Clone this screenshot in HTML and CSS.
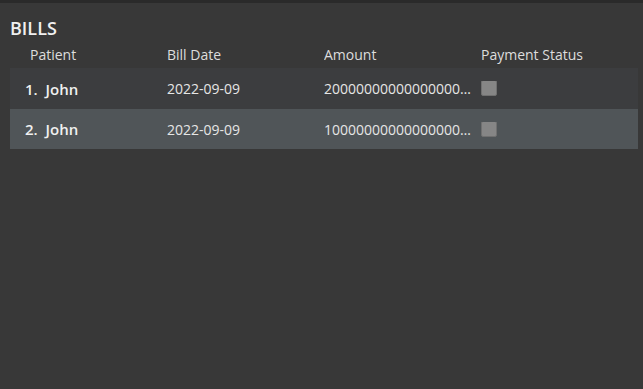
FILE: index.html
```html
<!DOCTYPE html>
<html lang="en">

<head>
	<meta charset="UTF-8">
	<meta name="viewport" content="width=device-width, initial-scale=1.0">
	<title>Bills</title>
	<link rel="stylesheet" href="styles.css">
</head>

<body>
	<div class="topo"></div>

	<div class="painel">
		<h1 class="titulo">BILLS</h1>

		<div class="cabecalho">
			<div class="col col-paciente">Patient</div>
			<div class="col">Bill Date</div>
			<div class="col">Amount</div>
			<div class="col">Payment Status</div>
		</div>

		<div class="linha">
			<div class="col col-nome">1.&nbsp; John</div>
			<div class="col">2022-09-09</div>
			<div class="col col-valor">200000000000000000000000</div>
			<div class="col"><span class="caixa"></span></div>
		</div>

		<div class="linha linha-sel">
			<div class="col col-nome">2.&nbsp; John</div>
			<div class="col">2022-09-09</div>
			<div class="col col-valor">100000000000000000000000</div>
			<div class="col"><span class="caixa"></span></div>
		</div>
	</div>
</body>

</html>
```

FILE: styles.css
```css
body,
html {
	margin: 0;
	height: 100%;
	background-color: #383838;
	font-family: 'Open Sans', 'Noto Sans', sans-serif;
	color: #e6e6e6;
}

.topo {
	height: 3px;
	background: #2a2a2a;
}

.painel {
	padding: 0 5px 0 10px;
}

.titulo {
	margin: 0;
	padding-top: 13px;
	font-size: 18px;
	line-height: 24px;
	font-weight: 600;
	color: #f0f0f0;
}

.cabecalho,
.linha {
	display: grid;
	grid-template-columns: repeat(4, 157px);
	align-items: center;
}

.cabecalho {
	height: 28px;
	padding-bottom: 0;
	font-size: 14px;
	color: #dddddd;
}

.linha {
	height: 41px;
	font-size: 14px;
	background: #3c3d3f;
}

.linha-sel {
	height: 40px;
	background: #505558;
}

.col {
	white-space: nowrap;
	overflow: hidden;
	text-overflow: ellipsis;
}

.col-paciente {
	padding-left: 20px;
}

.col-nome {
	padding-left: 15px;
	font-size: 15px;
	font-weight: 600;
	color: #f0f0f0;
}

.col-valor {
	padding-right: 8px;
}

.caixa {
	display: block;
	width: 16px;
	height: 16px;
	margin-top: -1px;
	border-radius: 2px;
	box-sizing: border-box;
	border: 1px solid #707070;
	background: #868686;
}
```
